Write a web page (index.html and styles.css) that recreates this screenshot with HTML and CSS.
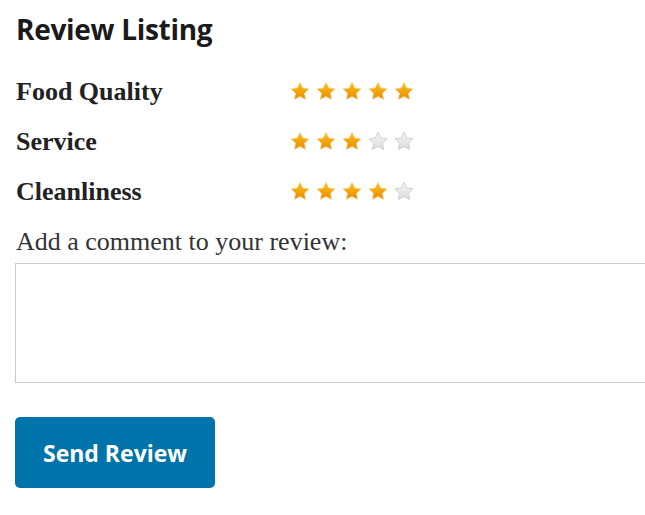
FILE: index.html
```html
<!DOCTYPE html>
<html>
<head>
    <link rel="stylesheet" href="styles.css">
</head>
<body>
    <svg width="0" height="0" class="defs">
        <defs>
            <linearGradient id="gold" x1="0" y1="0" x2="0" y2="1">
                <stop offset="0" stop-color="#fcc21b"/>
                <stop offset="1" stop-color="#e88a00"/>
            </linearGradient>
            <linearGradient id="grey" x1="0" y1="0" x2="0" y2="1">
                <stop offset="0" stop-color="#f4f4f4"/>
                <stop offset="1" stop-color="#dcdcdc"/>
            </linearGradient>
            <symbol id="star" viewBox="0 0 20 20">
                <path d="M10 1.3L12.82 6.92 19.03 7.86 14.56 12.28 15.58 18.49 10 15.6 4.42 18.49 5.44 12.28 0.97 7.86 7.18 6.92Z"/>
            </symbol>
        </defs>
    </svg>

    <div class="review">
        <h2 class="title">Review Listing</h2>

        <div class="rating_row">
            <span class="rating_label">Food Quality</span>
            <span class="stars">
                <svg class="star on"><use href="#star"/></svg>
                <svg class="star on"><use href="#star"/></svg>
                <svg class="star on"><use href="#star"/></svg>
                <svg class="star on"><use href="#star"/></svg>
                <svg class="star on"><use href="#star"/></svg>
            </span>
        </div>
        <div class="rating_row">
            <span class="rating_label">Service</span>
            <span class="stars">
                <svg class="star on"><use href="#star"/></svg>
                <svg class="star on"><use href="#star"/></svg>
                <svg class="star on"><use href="#star"/></svg>
                <svg class="star off"><use href="#star"/></svg>
                <svg class="star off"><use href="#star"/></svg>
            </span>
        </div>
        <div class="rating_row">
            <span class="rating_label">Cleanliness</span>
            <span class="stars">
                <svg class="star on"><use href="#star"/></svg>
                <svg class="star on"><use href="#star"/></svg>
                <svg class="star on"><use href="#star"/></svg>
                <svg class="star on"><use href="#star"/></svg>
                <svg class="star off"><use href="#star"/></svg>
            </span>
        </div>

        <label class="comment_label" for="comment">Add a comment to your review:</label>
        <textarea id="comment" class="comment"></textarea>

        <button class="send_button">Send Review</button>
    </div>
</body>
</html>
```

FILE: styles.css
```css
/* Page */
body {
    margin: 0;
    padding: 0;
    background-color: #fff;
    overflow: hidden;
}

.defs {
    position: absolute;
}

.review {
    padding: 0 15px;
    display: flex;
    flex-direction: column;
    align-items: flex-start;
    max-width: 615px;
}

/* Heading */
.title {
    font-family: "Open Sans", sans-serif;
    font-weight: 700;
    font-size: 28px;
    color: #1a1a1a;
    margin: 11px 0 20px 1px;
    line-height: 36px;
    letter-spacing: -0.3px;
}

/* Rating rows */
.rating_row {
    display: flex;
    align-items: center;
    height: 50px;
}

.rating_label {
    font-family: "Liberation Serif", serif;
    font-weight: 700;
    font-size: 26px;
    color: #222;
    width: 274px;
    padding-left: 1px;
}

.stars {
    display: flex;
    gap: 6px;
    margin-top: -2px;
}

.star {
    width: 20px;
    height: 20px;
}

.star.on {
    fill: url(#gold);
    stroke: #f6d89a;
    stroke-width: 0.8;
    stroke-linejoin: round;
}

.star.off {
    fill: url(#grey);
    stroke: #c8c8c8;
    stroke-width: 0.8;
    stroke-linejoin: round;
}

/* Comment */
.comment_label {
    font-family: "Liberation Serif", serif;
    font-size: 26px;
    color: #333;
    margin: 10px 0 6px 1px;
    line-height: 30px;
}

.comment {
    width: 700px;
    height: 120px;
    box-sizing: border-box;
    border: 1px solid #ccc;
    resize: none;
    margin: 0;
}

/* Button */
.send_button {
    margin-top: 34px;
    width: 200px;
    height: 71px;
    background-color: #0073aa;
    color: #fff;
    border: none;
    border-radius: 5px;
    font-family: "Open Sans", sans-serif;
    font-weight: 700;
    font-size: 23px;
    cursor: pointer;
}
```
